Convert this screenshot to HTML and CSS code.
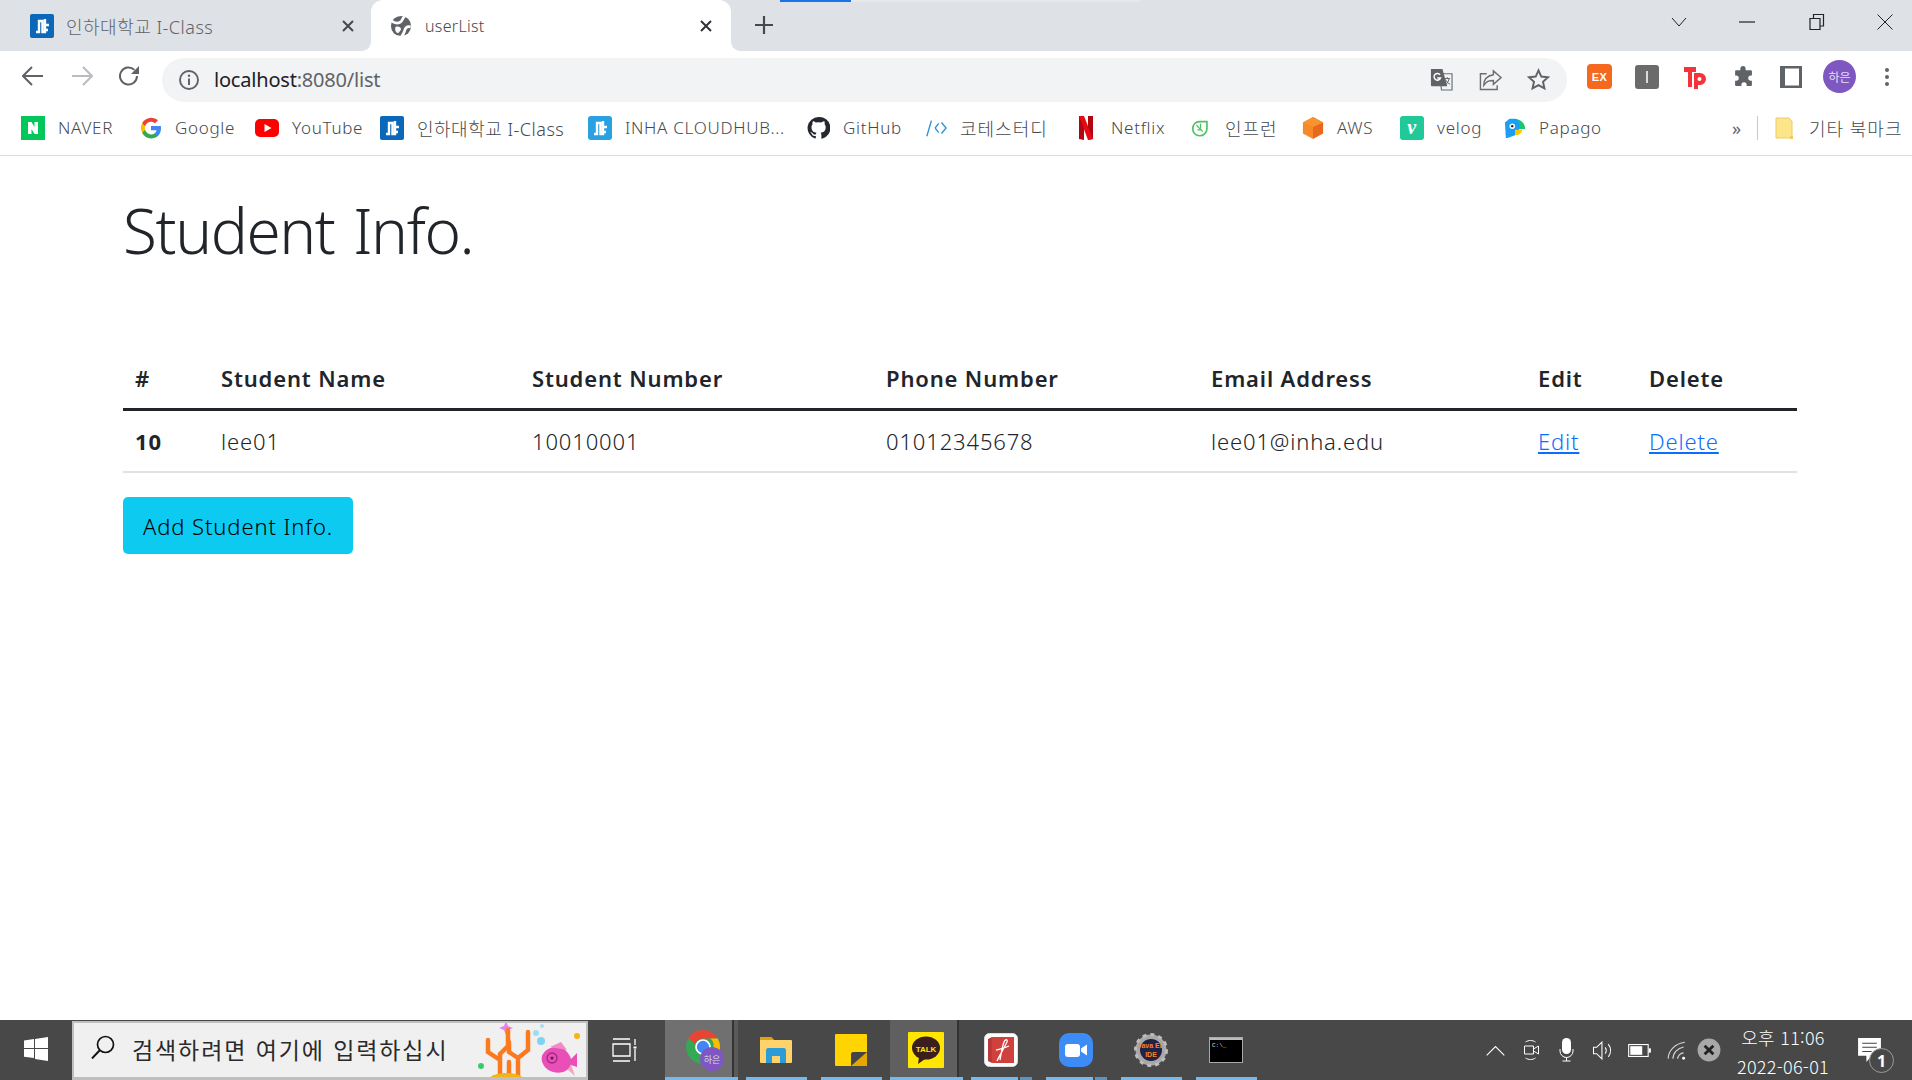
FILE: index.html
```html
<!DOCTYPE html>
<html lang="ko">
<head>
<meta charset="utf-8">
<title>userList</title>
<link rel="stylesheet" href="styles.css">
</head>
<body>
<div class="page">
  <div class="tabstrip">
    <div class="loadbar"><span class="loadbar-fill"></span></div>
    <div class="tab">
      <svg class="fav" viewBox="0 0 24 24"><rect width="24" height="24" rx="2" fill="#0b67b8"/><path d="M6 18h3V7h3.500v11H15V5M15 11h4M15 16h3" fill="none" stroke="#fff" stroke-width="2.4"/></svg>
      <span class="tab-title">인하대학교 I-Class</span>
      <svg class="tab-x" viewBox="0 0 12 12"><path d="M1 1l10 10M11 1L1 11" stroke="#45484c" stroke-width="2"/></svg>
    </div>
    <div class="tab tab-active">
      <svg class="fav" viewBox="0 0 24 24"><circle cx="12" cy="12" r="11" fill="#5f6368"/><path d="M16 1.500c-3 2-2 5-5 6.500S5 9 1.500 6.500M22.500 13c-3-1-5 0-6 2.500s-1 5-4 8" fill="none" stroke="#fff" stroke-width="3"/><path d="M6 13c3-1 6 0 6 3l-3 4c-3-1-4-4-3-7z" fill="#fff"/></svg>
      <span class="tab-title">userList</span>
      <svg class="tab-x" viewBox="0 0 12 12"><path d="M1 1l10 10M11 1L1 11" stroke="#303338" stroke-width="2"/></svg>
    </div>
    <svg class="newtab" viewBox="0 0 18 18"><path d="M9 0v18M0 9h18" stroke="#45484c" stroke-width="2.2"/></svg>
    <div class="winctl">
      <svg class="win-chev" viewBox="0 0 16 10"><path d="M1 1l7 8 7-8" fill="none" stroke="#222" stroke-width="1"/></svg>
      <svg class="win-min" viewBox="0 0 16 2"><path d="M0 1h16" stroke="#222" stroke-width="1.2"/></svg>
      <svg class="win-rest" viewBox="0 0 16 16"><path d="M1 4.500h10v11H1zM4.500 4V.5h10V12H11" fill="none" stroke="#222" stroke-width="1.2"/></svg>
      <svg class="win-close" viewBox="0 0 16 16"><path d="M.5.5l15 15M15.500.5l-15 15" stroke="#222" stroke-width="1"/></svg>
    </div>
  </div>

  <div class="toolbar">
    <svg class="nav" viewBox="0 0 22 20"><path d="M21 10H2M10 1l-9 9 9 9" fill="none" stroke="#5f6368" stroke-width="2"/></svg>
    <svg class="nav nav-fwd" viewBox="0 0 22 20"><path d="M1 10h19M12 1l9 9-9 9" fill="none" stroke="#b9bcc0" stroke-width="2"/></svg>
    <svg class="nav nav-reload" viewBox="0 0 22 22"><path d="M19 11a8.500 8.500 0 1 1-2.600-6.100" fill="none" stroke="#5f6368" stroke-width="2"/><path d="M21 1v8h-8z" fill="#5f6368"/></svg>
    <div class="omnibox">
      <svg class="info" viewBox="0 0 20 20"><circle cx="10" cy="10" r="9" fill="none" stroke="#5f6368" stroke-width="1.900"/><path d="M10 8.500V15" stroke="#5f6368" stroke-width="2"/><circle cx="10" cy="5.800" r="1.200" fill="#5f6368"/></svg>
      <span class="url"><b class="host">localhost</b>:8080/list</span>
      <svg class="omni-icon omni-translate" viewBox="0 0 24 24"><path d="M10 6h13v17H12z" fill="#f1f3f4" stroke="#6b6e72" stroke-width="1.200"/><path d="M1 1h12l5 18H2a1 1 0 0 1-1-1z" fill="#5f6368"/><path d="M10.500 7A3.500 3.500 0 1 0 11 10.500H7.500" fill="none" stroke="#fff" stroke-width="1.500"/><path d="M15 11h6M18 9.500V11M20 11c-1 4-3 6-4 7M16 12c1 2 3 4 5 5" fill="none" stroke="#5f6368" stroke-width="1"/></svg>
      <svg class="omni-icon" viewBox="0 0 24 24"><path d="M15 3l8 7-8 7v-4c-5 0-7 1-10 5 0-6 4-10 10-11z" fill="none" stroke="#6b6e72" stroke-width="1.500"/><path d="M8 6H1.500v16.500H19V18" fill="none" stroke="#6b6e72" stroke-width="1.500"/></svg>
      <svg class="omni-icon omni-star" viewBox="0 0 24 24"><path d="M12 2.500l2.900 6.400 7 .8-5.200 4.700 1.500 6.900-6.200-3.500-6.200 3.500 1.500-6.900L2.100 9.700l7-.8z" fill="none" stroke="#5f6368" stroke-width="2"/></svg>
    </div>
    <div class="extensions">
      <svg class="ext ext-ex" viewBox="0 0 25 25"><rect width="25" height="25" rx="4" fill="#f4691f"/><text x="12.500" y="16.500" class="ext-ex-text">EX</text></svg>
      <svg class="ext ext-i" viewBox="0 0 24 24"><rect width="24" height="24" rx="3" fill="#6b6b6b"/><path d="M12 6v12" stroke="#fff" stroke-width="1.500"/></svg>
      <svg class="ext ext-tp" viewBox="0 0 24 24"><path d="M1 2h12v5H9v15H5V7H1z" fill="#f4333c"/><path d="M11 8h6a6 6 0 0 1 0 12h-2v4h-4z" fill="#f4333c"/><circle cx="16.500" cy="14" r="2" fill="#fff"/></svg>
      <svg class="ext ext-puzzle" viewBox="0 0 20 20"><path d="M7 2.500a2.500 2.500 0 0 1 5 0V4h5a1 1 0 0 1 1 1v4h-1a2.500 2.500 0 0 0 0 5h1v4a1 1 0 0 1-1 1h-4v-1a2.500 2.500 0 0 0-5 0v1H3a1 1 0 0 1-1-1v-4h1a2.500 2.500 0 0 0 0-5H2V5a1 1 0 0 1 1-1h4z" fill="#5f6368"/></svg>
      <svg class="ext ext-panel" viewBox="0 0 22 22"><path fill-rule="evenodd" d="M0 0h22v22H0zM5 2.500v17h14v-17z" fill="#5f6368"/></svg>
      <span class="avatar">하은</span>
      <svg class="ext ext-dots" viewBox="0 0 4 20"><circle cx="2" cy="3" r="2" fill="#5f6368"/><circle cx="2" cy="10" r="2" fill="#5f6368"/><circle cx="2" cy="17" r="2" fill="#5f6368"/></svg>
    </div>
  </div>

  <nav class="bookmarks">
    <a class="bm"><svg class="bm-icon" viewBox="0 0 24 24"><rect width="24" height="24" fill="#03c75a"/><path d="M7 6h3.500l3 5V6H17v12h-3.500l-3-5v5H7z" fill="#fff"/></svg><span>NAVER</span></a>
    <a class="bm"><svg class="bm-icon bm-w22" viewBox="1 1 22 22"><path d="M22 12.300c0-.8-.1-1.500-.2-2.200H12v4.100h5.600a4.800 4.800 0 0 1-2.100 3.200v2.700h3.400c2-1.800 3.100-4.600 3.100-7.800z" fill="#4285f4"/><path d="M12 22.500c2.800 0 5.200-.9 6.900-2.500l-3.400-2.600c-.9.600-2.100 1-3.500 1-2.700 0-5-1.800-5.800-4.300H3.100v2.700A10.500 10.500 0 0 0 12 22.500z" fill="#34a853"/><path d="M6.200 14.100a6.300 6.300 0 0 1 0-4.200V7.200H3.100a10.500 10.500 0 0 0 0 9.600z" fill="#fbbc05"/><path d="M12 5.700c1.500 0 2.900.5 4 1.600l3-3A10.500 10.500 0 0 0 3.100 7.200l3.100 2.700C7 7.400 9.300 5.700 12 5.700z" fill="#ea4335"/></svg><span>Google</span></a>
    <a class="bm"><svg class="bm-icon" viewBox="0 0 24 24"><rect y="3" width="24" height="18" rx="5" fill="#f00"/><path d="M9.500 8l7 4-7 4z" fill="#fff"/></svg><span>YouTube</span></a>
    <a class="bm bm-mix"><svg class="bm-icon" viewBox="0 0 24 24"><rect width="24" height="24" rx="2" fill="#0b67b8"/><path d="M6 18h3V7h3.500v11H15V5M15 11h4M15 16h3" fill="none" stroke="#fff" stroke-width="2.400"/></svg><span>인하대학교 I-Class</span></a>
    <a class="bm"><svg class="bm-icon" viewBox="0 0 24 24"><rect width="24" height="24" rx="3" fill="#29a0e0"/><path d="M6 18h3V7h3.500v11H15V5M15 11h4M15 16h3" fill="none" stroke="#fff" stroke-width="2.400"/></svg><span>INHA CLOUDHUB...</span></a>
    <a class="bm"><svg class="bm-icon bm-w23" viewBox="0 0 24 24"><path d="M12 .5a11.500 11.500 0 0 0-3.600 22.400c.6.100.8-.2.8-.6v-2c-3.200.7-3.900-1.500-3.900-1.500-.5-1.300-1.300-1.700-1.300-1.700-1-.7.100-.7.100-.7 1.200.1 1.800 1.200 1.800 1.200 1 1.800 2.700 1.300 3.400 1 .1-.8.400-1.300.7-1.600-2.600-.3-5.300-1.300-5.300-5.700 0-1.300.5-2.300 1.200-3.100-.1-.3-.5-1.500.1-3.100 0 0 1-.3 3.200 1.200a11 11 0 0 1 5.800 0c2.200-1.500 3.200-1.200 3.200-1.200.6 1.600.2 2.800.1 3.100.7.800 1.200 1.800 1.200 3.100 0 4.400-2.700 5.400-5.300 5.700.4.400.8 1.100.8 2.200v3.300c0 .3.200.7.800.6A11.500 11.500 0 0 0 12 .5z" fill="#24292f"/></svg><span>GitHub</span></a>
    <a class="bm bm-ko"><svg class="bm-icon bm-w22" viewBox="0 0 24 24"><path d="M7 4L2 21M11 12l4-5M11 12l4 5M18 6l5 6-5 6" fill="none" stroke="#2e93d6" stroke-width="1.500"/></svg><span>코테스터디</span></a>
    <a class="bm"><svg class="bm-icon bm-narrow" viewBox="0 0 14 24"><path d="M0 0h5v24l-5-1z" fill="#b1060f"/><path d="M9 0h5v23l-5 1z" fill="#b1060f"/><path d="M0 0h5l9 23-5 1z" fill="#e50914"/></svg><span>Netflix</span></a>
    <a class="bm bm-ko"><svg class="bm-icon bm-w22" viewBox="0 0 22 24"><path d="M2 13a7.500 7.500 0 0 1 7.500-8h8v8a8 8 0 0 1-8 7.500A7.500 7.500 0 0 1 2 13z" fill="none" stroke="#4cc35f" stroke-width="1.800"/><path d="M6 9l7 7M10.500 7v5.500M7 14h4.500" fill="none" stroke="#4cc35f" stroke-width="1.300"/></svg><span>인프런</span></a>
    <a class="bm"><svg class="bm-icon bm-w22" viewBox="0 0 24 24"><path d="M12 0l11 6v12l-11 6z" fill="#e8681e"/><path d="M12 0L1 6v12l11 6z" fill="#f68a2a"/><path d="M12 11L1 6l11-6 11 6z" fill="#f9922f"/></svg><span>AWS</span></a>
    <a class="bm"><svg class="bm-icon" viewBox="0 0 24 24"><rect width="24" height="24" rx="3" fill="#20c997"/><text x="12" y="18" class="velog-v">v</text></svg><span>velog</span></a>
    <a class="bm"><svg class="bm-icon bm-w22" viewBox="0 0 24 24"><path d="M11 2c6 0 12 4 12 11H11z" fill="#19c86d"/><path d="M1 6l5-4h5c5 0 6 5 6 9v2l-5 7-8 3H2z" fill="#1a9ff5"/><circle cx="9" cy="10" r="3" fill="#fff"/><circle cx="9" cy="10" r="1.300" fill="#222"/><path d="M12 14h8c-1 4-4 6-8 6z" fill="#ffc400"/></svg><span>Papago</span></a>
    <div class="bm-more">
      <span class="bm-chev">»</span>
      <span class="bm-sep"></span>
      <a class="bm bm-ko bm-folder"><svg class="bm-icon" viewBox="0 0 20 24"><path d="M1 2h13l3 3v17H1z" fill="#fde58a" stroke="#eecb64"/><path d="M15 20h3v3h-3z" fill="#eecb64"/></svg><span>기타 북마크</span></a>
    </div>
  </nav>

  <main class="content">
    <h1 class="title">Student Info.</h1>
    <table class="students">
      <colgroup>
        <col class="c1"><col class="c2"><col class="c3"><col class="c4"><col class="c5"><col class="c6"><col class="c7">
      </colgroup>
      <thead>
        <tr><th>#</th><th>Student Name</th><th>Student Number</th><th>Phone Number</th><th>Email Address</th><th>Edit</th><th>Delete</th></tr>
      </thead>
      <tbody>
        <tr><th>10</th><td>lee01</td><td>10010001</td><td>01012345678</td><td>lee01@inha.edu</td><td><a href="#">Edit</a></td><td><a href="#">Delete</a></td></tr>
      </tbody>
    </table>
    <a class="btn-add">Add Student Info.</a>
  </main>

  <footer class="taskbar">
    <svg class="start" viewBox="0 0 24 24"><path d="M0 3.500l10-1.400V11H0zM11 2l13-2v11H11zM0 12h10v9L0 19.700zM11 12h13v12l-13-2z" fill="#fff"/></svg>
    <div class="search">
      <svg class="search-icon" viewBox="0 0 24 24"><circle cx="14.500" cy="9.500" r="8" fill="none" stroke="#111" stroke-width="1.700"/><path d="M9 15L1 23.500" stroke="#111" stroke-width="1.900"/></svg>
      <span class="search-text">검색하려면 여기에 입력하십시</span>
      <svg class="search-art" viewBox="0 0 110 60">
        <path d="M30 1l2 5 5 2-5 2-2 5-2-5-5-2 5-2z" fill="#e481ec"/>
        <circle cx="60" cy="13" r="3" fill="#9cdcf5"/><circle cx="66" cy="6" r="2" fill="#a8dff5"/><circle cx="65" cy="21" r="4" fill="#7fd3f2"/>
        <circle cx="101" cy="16" r="3" fill="#fbb116"/><circle cx="5" cy="46" r="3" fill="#3ccb6a"/>
        <path d="M24 56V34M24 40l-12-8V20M24 34l8-8V10M42 56V38l10-8V12M42 38l-9-6V22M33 56V42" fill="none" stroke="#fb7a1e" stroke-width="4.500" stroke-linecap="round"/>
        <path d="M11 62c2-7 11-9 19-9s18 2 20 9z" fill="#f2b31c"/>
        <path d="M66 36c3-8 15-12 22-7 4 3 6 7 7 10l6-6v14l-6-2c-3 7-11 9-18 7-7-2-13-9-11-16z" fill="#e94fb7"/>
        <path d="M74 27l11-5 6 8z" fill="#f18bc5"/><path d="M92 50l7 6-4-12z" fill="#f5a3c8"/>
        <circle cx="76" cy="38" r="5" fill="none" stroke="#9c2d80" stroke-width="1.300"/><circle cx="76" cy="38" r="1.500" fill="#5b1a50"/>
      </svg>
    </div>
    <svg class="taskview" viewBox="0 0 26 24"><path d="M1 6h17v12H1zM1 1h17M1 23h17M23 1v6M23 11v12" fill="none" stroke="#fff" stroke-width="1.300"/><rect x="21.500" y="8.500" width="3" height="2" fill="#fff"/></svg>

    <div class="task task-chrome">
      <svg class="app-chrome" viewBox="0 0 34 34"><circle cx="17" cy="17" r="17" fill="#34a853"/><path d="M17 0a17 17 0 0 1 14.700 8.500H17a8.500 8.500 0 0 0-8 5.500L2.300 8.500A17 17 0 0 1 17 0z" fill="#ea4335"/><path d="M31.700 8.500A17 17 0 0 1 17 34l7.300-12a8.500 8.500 0 0 0 0-13.500z" fill="#fbbc05"/><circle cx="17" cy="17" r="7" fill="#4285f4" stroke="#fff" stroke-width="1.700"/></svg>
      <span class="task-badge">하은</span>
    </div>
    <div class="task task-wide">
      <svg class="app app-folder" viewBox="0 0 32 26"><path d="M0 1a1 1 0 0 1 1-1h10l3 3h17a1 1 0 0 1 1 1v21a1 1 0 0 1-1 1H1a1 1 0 0 1-1-1z" fill="#ffd36b"/><path d="M0 1a1 1 0 0 1 1-1h10l3 3H0z" fill="#e2a00e"/><path d="M6 26V13c0-1 1-2 2-2h16c1 0 2 1 2 2v13h-6v-7h-8v7z" fill="#2d9bd8"/></svg>
    </div>
    <div class="task task-narrow">
      <svg class="app app-sticky" viewBox="0 0 32 32"><path d="M1 0h30a1 1 0 0 1 1 1v30a1 1 0 0 1-1 1H1a1 1 0 0 1-1-1V1a1 1 0 0 1 1-1z" fill="#ffd400"/><path d="M16 32V20c0-1 1-2 2-2h14v2L19 32z" fill="#444"/><path d="M16 32l16-14v13a1 1 0 0 1-1 1z" fill="#e2a800"/></svg>
    </div>
    <div class="task task-open">
      <svg class="app app-talk" viewBox="0 0 36 36"><rect width="36" height="36" rx="1" fill="#ffe600"/><ellipse cx="18" cy="16" rx="14" ry="11.500" fill="#3b1e1e"/><path d="M11 25l-1 7 7-5z" fill="#3b1e1e"/><text x="18" y="19.500" class="talk-text">TALK</text></svg>
    </div>
    <div class="task task-stack">
      <svg class="app app-34" viewBox="0 0 34 34"><rect x=".5" y=".5" width="33" height="33" rx="5" fill="#fff" stroke="#ddd"/><path d="M4 6l4-2v26l-4-2z" fill="#b93a38"/><path d="M8 4h22v26H8z" fill="#d0403c"/><path d="M13 28C17 20 21 13 23 9c1-3-2-3-3 0-2 5-3 13-4 18M12 17c4-1 9-2 13-4" fill="none" stroke="#fff" stroke-width="1.300"/></svg>
    </div>
    <div class="task task-stack">
      <svg class="app app-34" viewBox="0 0 34 34"><rect width="34" height="34" rx="10" fill="#3d8cf5"/><rect x="6" y="11" width="15" height="13" rx="3" fill="#fff"/><path d="M22 15.500l6-4v11l-6-4z" fill="#fff"/></svg>
    </div>
    <div class="task">
      <svg class="app app-34" viewBox="0 0 34 34"><circle cx="17" cy="17" r="13" fill="none" stroke="#a8a8a8" stroke-width="5"/><circle cx="17" cy="17" r="15.500" fill="none" stroke="#bdbdbd" stroke-width="3" stroke-dasharray="4 4"/><circle cx="17" cy="17" r="11" fill="#222246"/><text x="17" y="14.500" class="java-text">Java EE</text><text x="17" y="23.500" class="java-text">IDE</text></svg>
    </div>
    <div class="task">
      <svg class="app app-cmd" viewBox="0 0 34 26"><rect x=".5" y=".5" width="33" height="25" fill="#000" stroke="#a9a9a9"/><rect x="1" y="1" width="32" height="2" fill="#bdbdbd"/><text x="3" y="10" class="cmd-text">C:\_</text></svg>
    </div>

    <div class="tray">
      <svg class="tray-i tray-chev" viewBox="0 0 17 10"><path d="M.5 9.500L8.500 1.500l8 8" fill="none" stroke="#fff" stroke-width="1"/></svg>
      <svg class="tray-i tray-cam" viewBox="0 0 16 22"><path d="M1 7h9v8H1zM10 10l5-3v8l-5-3zM2 3c3-2 7-2 10 0M2 19c3 2 7 2 10 0" fill="none" stroke="#fff" stroke-width="1"/></svg>
      <svg class="tray-i tray-mic" viewBox="0 0 14 24"><rect x="2.500" y="0" width="9" height="16" rx="4.500" fill="#fff"/><path d="M.5 11v2a6.500 6.500 0 0 0 13 0v-2M7 19.500V23M3 23h8" fill="none" stroke="#fff" stroke-width="1"/></svg>
      <svg class="tray-i tray-vol" viewBox="0 0 20 18"><path d="M1 6h3l5-5v16l-5-5H1z" fill="none" stroke="#fff" stroke-width="1"/><path d="M12 6c1.500 2 1.500 4 0 6M15 3c3 4 3 8 0 12" fill="none" stroke="#fff" stroke-width="1"/></svg>
      <svg class="tray-i tray-bat" viewBox="0 0 21 12"><rect x=".5" y=".5" width="18" height="11" fill="none" stroke="#fff"/><rect x="2" y="2" width="11" height="8" fill="#fff"/><rect x="19" y="4" width="2" height="4" fill="#fff"/></svg>
      <svg class="tray-i tray-wifi" viewBox="0 0 16 16"><path d="M1 15C1 8 7 2 15 1M5 15c0-5 4-9 9-10M9 15c0-2 2-5 5-5" fill="none" stroke="#d8d8d8" stroke-width=".9"/><circle cx="14" cy="14.500" r="1.200" fill="#fff"/></svg>
      <svg class="tray-i tray-x" viewBox="0 0 22 22"><circle cx="11" cy="11" r="10.500" fill="#a8a8a8"/><path d="M7 7l8 8M15 7l-8 8" stroke="#222" stroke-width="2.600"/></svg>
      <div class="clock"><span>오후 11:06</span><span>2022-06-01</span></div>
      <div class="notify">
        <svg class="notify-i" viewBox="0 0 22 26"><path d="M0 0h22v17H13l-5 6v-6H0z" fill="#fff"/><path d="M4 5h14M4 9h14M4 13h9" stroke="#444" stroke-width="1"/></svg>
        <span class="notify-n">1</span>
      </div>
    </div>
  </footer>
</div>
</body>
</html>
```
FILE: styles.css
```css
* { box-sizing: border-box; }
html, body { margin: 0; padding: 0; height: 100%; }
body { font-family: "Noto Sans", "Noto Sans CJK KR", sans-serif; background: #fff; color: #212529; }
.page { display: flex; flex-direction: column; height: 1080px; overflow: hidden; }

/* tab strip */
.tabstrip { position: relative; display: flex; align-items: stretch; height: 51px; background: #dee1e6; flex: none; }
.loadbar { position: absolute; left: 780px; top: 0; width: 360px; height: 2px; background: #e6e8ec; }
.loadbar-fill { display: block; width: 71px; height: 2px; background: #1a73e8; }
.tab { display: flex; align-items: center; width: 371px; padding-left: 30px; flex: none; position: relative; color: #5f6368; font-size: 18px; font-weight: 300; letter-spacing: .5px; }
.fav { width: 24px; height: 24px; flex: none; margin-right: 12px; }
.tab-title { flex: 1; white-space: nowrap; }
.tab-x { width: 12px; height: 12px; margin-right: 17px; flex: none; }
.tab-active { width: 360px; padding-left: 19px; background: #fff; border-radius: 12px 12px 0 0; color: #45484c; font-size: 16px; letter-spacing: .3px; }
.tab-active::before, .tab-active::after { content: ""; position: absolute; bottom: 0; width: 9px; height: 9px; }
.tab-active::before { left: -9px; background: radial-gradient(circle at 0 0, #dee1e6 8.500px, #fff 9px); }
.tab-active::after { right: -9px; background: radial-gradient(circle at 100% 0, #dee1e6 8.500px, #fff 9px); }
.tab-active .fav { margin-right: 13px; width: 22px; height: 22px; }
.tab-active .tab-x { margin-right: 19px; }
.newtab { width: 18px; height: 18px; margin: 16px 0 0 24px; flex: none; }
.winctl { margin-left: auto; display: flex; align-items: flex-start; }
.win-chev { width: 16px; height: 10px; margin: 17px 0 0 0; }
.win-min { width: 16px; height: 2px; margin: 21px 0 0 52px; }
.win-rest { width: 16px; height: 16px; margin: 14px 0 0 54px; }
.win-close { width: 16px; height: 16px; margin: 14px 19px 0 52px; }

/* toolbar */
.toolbar { display: flex; align-items: center; height: 51px; background: #fff; flex: none; padding-left: 22px; }
.nav { width: 22px; height: 20px; flex: none; margin-top: -2px; }
.nav-fwd { margin-left: 27px; }
.nav-reload { margin-left: 25px; height: 22px; }
.omnibox { display: flex; align-items: center; width: 1405px; height: 44px; margin: 6px 0 0 22px; background: #f1f3f4; border-radius: 22px; padding-left: 17px; flex: none; }
.info { width: 20px; height: 20px; flex: none; }
.url { margin-left: 15px; font-size: 20px; color: #5f6368; letter-spacing: -.2px; flex: 1; }
.host { font-weight: 400; color: #202124; }
.omni-icon { width: 23px; height: 23px; flex: none; margin-right: 25px; }
.omni-translate { margin-right: 26px; }
.omni-star { margin-right: 17px; }
.extensions { display: flex; align-items: center; margin-left: 20px; }
.ext { flex: none; }
.ext-ex { width: 25px; height: 25px; }
.ext-ex-text { font: 700 11px "Liberation Sans", sans-serif; fill: #fff; text-anchor: middle; letter-spacing: .5px; }
.ext-i { width: 24px; height: 24px; margin-left: 23px; }
.ext-tp { width: 24px; height: 24px; margin-left: 24px; }
.ext-puzzle { width: 21px; height: 21px; margin-left: 26px; }
.ext-panel { width: 22px; height: 22px; margin-left: 26px; }
.avatar { width: 33px; height: 33px; margin-left: 21px; border-radius: 50%; background: #7e57c2; color: #e8e0f5; font-size: 12px; display: flex; align-items: center; justify-content: center; flex: none; }
.ext-dots { width: 4px; height: 20px; margin-left: 29px; }

/* bookmarks */
.bookmarks { display: grid; grid-template-columns: 119px 115px 125px 208px 219px 118px 152px 113px 112px 98px 104px 228px 1fr; align-items: center; height: 54px; padding: 0 0 2px 21px; border-bottom: 1px solid #dadce0; flex: none; background: #fff; }
.bm { display: flex; align-items: center; gap: 13px; font-size: 17px; font-weight: 300; letter-spacing: .7px; color: #45484c; white-space: nowrap; }
.bm-ko { font-size: 18px; letter-spacing: 1px; }
.bm-mix { font-size: 18px; letter-spacing: .5px; }
.bm-icon { width: 24px; height: 24px; flex: none; }
.bm-w22 { width: 22px; height: 22px; }
.bm-w23 { width: 23px; }
.bm-narrow { width: 14px; margin: 0 5px 0 2px; }
.bm-more { display: flex; align-items: center; grid-column: 13; }
.bm-chev { font-size: 18px; color: #5f6368; width: 25px; }
.bm-sep { width: 1px; height: 24px; background: #c8c9cb; margin-right: 17px; }
.bm-folder { gap: 14px; }
.bm-folder .bm-icon { width: 20px; }

/* content */
.content { flex: 1; padding: 36px 115px 0 123px; background: #fff; }
.title { margin: 0 0 81px; font-size: 62px; line-height: 76px; font-weight: 300; letter-spacing: -1.4px; word-spacing: 4px; color: #212529; }
.students { width: 100%; border-collapse: collapse; table-layout: fixed; font-size: 22px; letter-spacing: .85px; color: #212529; }
.c1 { width: 86px; } .c2 { width: 311px; } .c3 { width: 354px; } .c4 { width: 325px; } .c5 { width: 327px; } .c6 { width: 111px; }
.students th, .students td { padding: 0 12px; text-align: left; height: 63px; }
.students thead th { height: 60px; border-bottom: 3px solid #212529; font-weight: 600; }
.students tbody tr { border-bottom: 2px solid #dee2e6; }
.students tbody th { font-weight: 700; }
.students td { font-weight: 300; }
.students a { color: #0d6efd; }
.btn-add { display: inline-flex; align-items: center; justify-content: center; margin-top: 24px; width: 230px; height: 57px; background: #0dcaf0; border-radius: 5px; color: #000; font-size: 22px; letter-spacing: .9px; font-weight: 300; }

/* taskbar */
.taskbar { display: flex; align-items: stretch; height: 60px; background: #484848; flex: none; color: #fff; position: relative; }
.start { width: 24px; height: 24px; margin: 17px 24px 0 24px; flex: none; }
.search { display: flex; align-items: flex-start; width: 516px; margin-top: 1px; background: #f0f0f0; border: 2px solid #bfbfbf; border-bottom-width: 3px; flex: none; padding-left: 17px; overflow: hidden; color: #2a2a2a; }
.search-icon { width: 24px; height: 24px; flex: none; margin-top: 12px; }
.search-text { margin: 9px 0 0 17px; font-size: 23px; letter-spacing: 1.9px; font-weight: 400; font-family: "Noto Sans CJK KR", sans-serif; white-space: nowrap; flex: 1; }
.search-art { width: 110px; height: 60px; flex: none; margin: -3px 0 0 0; }
.taskview { width: 26px; height: 24px; margin: 18px 27px 0 24px; flex: none; }
.task { position: relative; display: flex; align-items: center; justify-content: center; width: 61px; flex: none; margin-right: 14px; }
.task::after { content: ""; position: absolute; left: 0; right: 0; bottom: 0; height: 3px; background: #76b9ed; }
.task-chrome { width: 73px; margin-right: 8px; background: linear-gradient(90deg, #707070 67px, #333 67px 69px, #5a5a5a 69px); }
.task-narrow { margin-right: 8px; }
.task-open { width: 73px; margin-right: 8px; background: linear-gradient(90deg, #5f5f5f 67px, #333 67px 69px, #484848 69px); }
.task-stack::after { background: linear-gradient(90deg, #76b9ed 47px, #484848 47px 49px, #5d93bd 49px); }
.app-chrome { width: 34px; height: 34px; margin: -6px 0 0 3px; }
.task-badge { position: absolute; left: 35px; top: 27px; width: 24px; height: 24px; border-radius: 50%; background: #7e57c2; font-size: 9px; display: flex; align-items: center; justify-content: center; color: #ddd; z-index: 1; }
.app { flex: none; margin-left: -2px; }
.app-folder { width: 32px; height: 26px; }
.app-sticky { width: 32px; height: 32px; }
.app-talk { width: 36px; height: 36px; }
.app-34 { width: 34px; height: 34px; }
.app-cmd { width: 34px; height: 26px; }
.talk-text { font: 700 8px "Liberation Sans", sans-serif; fill: #ffe600; text-anchor: middle; }
.java-text { font: 700 7px "Liberation Sans", sans-serif; fill: #f08a1d; text-anchor: middle; }
.cmd-text { font: 6px "Liberation Mono", monospace; fill: #ddd; }
.velog-v { font: italic 700 20px "Liberation Serif", serif; fill: #fff; text-anchor: middle; }

.tray { display: flex; align-items: center; margin-left: auto; flex: none; }
.tray-i { flex: none; }
.tray-chev { width: 19px; height: 11px; }
.tray-cam { width: 17px; height: 22px; margin-left: 18px; }
.tray-mic { width: 15px; height: 24px; margin-left: 19px; }
.tray-vol { width: 22px; height: 19px; margin-left: 18px; }
.tray-bat { width: 23px; height: 13px; margin-left: 14px; }
.tray-wifi { width: 19px; height: 19px; margin-left: 16px; }
.tray-x { width: 24px; height: 24px; margin-left: 11px; }
.clock { display: flex; flex-direction: column; align-items: center; gap: 5px; width: 100px; margin: 3px 0 0 12px; font-size: 18px; letter-spacing: .3px; line-height: 24px; font-family: "Noto Sans CJK KR", sans-serif; font-weight: 300; }
.notify { position: relative; align-self: flex-start; width: 36px; height: 35px; margin: 18px 18px 0 25px; }
.notify-i { display: block; width: 23px; height: 27px; }
.notify-n { position: absolute; right: 0; bottom: 0; width: 25px; height: 25px; border-radius: 50%; border: 1px solid #9a9a9a; background: #484848; font-size: 16px; font-weight: 700; display: flex; align-items: center; justify-content: center; }
```
